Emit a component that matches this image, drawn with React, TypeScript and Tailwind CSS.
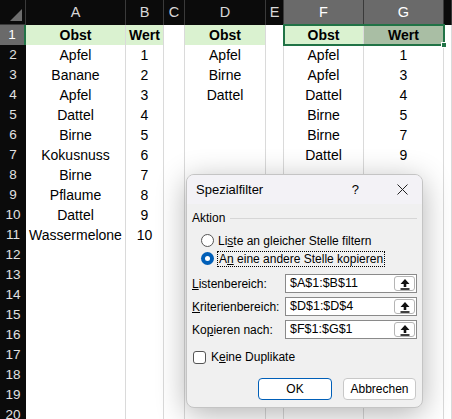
const cols = ['A', 'B', 'C', 'D', 'E', 'F', 'G', '']

const data: string[][] = [
  ['Obst', 'Wert', '', 'Obst', '', 'Obst', 'Wert', ''],
  ['Apfel', '1', '', 'Apfel', '', 'Apfel', '1', ''],
  ['Banane', '2', '', 'Birne', '', 'Apfel', '3', ''],
  ['Apfel', '3', '', 'Dattel', '', 'Dattel', '4', ''],
  ['Dattel', '4', '', '', '', 'Birne', '5', ''],
  ['Birne', '5', '', '', '', 'Birne', '7', ''],
  ['Kokusnuss', '6', '', '', '', 'Dattel', '9', ''],
  ['Birne', '7', '', '', '', '', '', ''],
  ['Pflaume', '8', '', '', '', '', '', ''],
  ['Dattel', '9', '', '', '', '', '', ''],
  ['Wassermelone', '10', '', '', '', '', '', ''],
]

const gridCols = 'grid grid-cols-[26px_100px_38px_21px_81px_18px_80px_80px_1fr]'

function cellBg(r: number, c: number) {
  if (r !== 0) return 'bg-white'
  if (c === 6) return 'bg-[#a9bea4]'
  if (c === 0 || c === 1 || c === 3 || c === 5) return 'bg-[#daf2d0]'
  return 'bg-white'
}

function UpIcon() {
  return (
    <svg width="10" height="12" viewBox="0 0 10 12">
      <path d="M5 1 L9.5 6 H6.3 V9 H3.7 V6 H0.5 Z" fill="#111" />
      <rect x="0.5" y="10.2" width="9" height="1.6" fill="#111" />
    </svg>
  )
}

function RangeInput({ label, value }: { label: React.ReactNode; value: string }) {
  return (
    <div className="flex items-center h-[19px] mb-[4px]">
      <div className="w-[93px]">{label}</div>
      <div className="flex-1 h-[19px] bg-white border border-[#8a8a8a] flex items-center pl-[4px] pr-[1px]">
        <span className="flex-1 text-[12.5px]">{value}</span>
        <div className="w-[21px] h-[15px] border border-[#b5b5b5] rounded-[3px] bg-white flex items-center justify-center">
          <UpIcon />
        </div>
      </div>
    </div>
  )
}

export default function App() {
  return (
    <div className="relative w-[452px] h-[419px] overflow-hidden bg-white font-['Liberation_Sans',Arial,sans-serif]">
      {/* column headers */}
      <div className={`${gridCols} h-[25px] bg-[#0b0b0b]`}>
        <div className="relative border-r border-[#3a3a3a] border-b border-b-[#3a3a3a]">
          <div className="absolute right-[3px] bottom-[3px] w-0 h-0 border-l-[12px] border-l-transparent border-b-[12px] border-b-[#6e6e6e]" />
        </div>
        {cols.map((c, i) => (
          <div
            key={i}
            className={`flex items-center justify-center text-[14.5px] border-r border-[#3a3a3a] ${
              i === 5 || i === 6 ? 'bg-[#6a6a6a] text-white' : 'text-[#d8d8d8]'
            }`}
          >
            {c}
          </div>
        ))}
      </div>

      {/* rows */}
      {Array.from({ length: 20 }).map((_, r) => (
        <div key={r} className={`${gridCols} h-[20px]`}>
          <div
            className={`flex items-center justify-center text-[13.5px] border-b border-[#3a3a3a] ${
              r === 0 ? 'bg-[#6a6a6a] text-white border-r-2 border-r-[#217346]' : 'bg-[#0b0b0b] text-[#e2e2e2]'
            }`}
          >
            {r + 1}
          </div>
          {cols.map((_, c) => (
            <div
              key={c}
              className={`flex items-center justify-center text-[14px] text-black border-r border-b border-[#dadada] whitespace-nowrap ${cellBg(r, c)} ${
                r === 0 ? 'font-bold' : ''
              }`}
            >
              {data[r]?.[c] ?? ''}
            </div>
          ))}
        </div>
      ))}

      {/* selection F1:G1 */}
      <div className="absolute left-[283px] top-[24px] w-[162px] h-[22px] border-2 border-[#217346]" />
      <div className="absolute left-[441px] top-[42px] w-[6px] h-[6px] bg-[#217346] border border-white" />

      {/* dialog */}
      <div className="absolute left-[186px] top-[174px] w-[237px] h-[234px] rounded-[8px] border border-[#c4c4c4] bg-[#f0f0f0] shadow-[0_6px_30px_rgba(0,0,0,0.3)] overflow-hidden text-[12px] text-black">
        <div className="h-[29px] bg-[#f3f2f6] flex items-center pl-[9px] pr-[14px]">
          <span className="flex-1 text-[13px]">Spezialfilter</span>
          <span className="mr-[38px] text-[13px]">?</span>
          <svg width="11" height="11" viewBox="0 0 11 11">
            <path d="M0.5 0.5 L10.5 10.5 M10.5 0.5 L0.5 10.5" stroke="#222" strokeWidth="1" />
          </svg>
        </div>

        <div className="px-[5px]">
          <div className="flex items-center mt-[7px] h-[14px]">
            <span className="mr-[5px]">Aktion</span>
            <div className="flex-1 h-px bg-[#d6d6d6]" />
          </div>

          <div className="pl-[9px] mt-[7px]">
            <div className="flex items-center h-[17px]">
              <div className="w-[13px] h-[13px] rounded-full border border-[#555] bg-white mr-[4px]" />
              <span>
                Li<u>s</u>te an gleicher Stelle filtern
              </span>
            </div>
            <div className="flex items-center h-[17px] mt-[1px]">
              <div className="w-[13px] h-[13px] rounded-full bg-[#005fb8] flex items-center justify-center mr-[3px]">
                <div className="w-[5px] h-[5px] rounded-full bg-white" />
              </div>
              <span className="border border-dotted border-black px-[1px] leading-[14px]">
                A<u>n</u> eine andere Stelle kopieren
              </span>
            </div>
          </div>

          <div className="mt-[7px]">
            <RangeInput label={<><u>L</u>istenbereich:</>} value="$A$1:$B$11" />
            <RangeInput label={<><u>K</u>riterienbereich:</>} value="$D$1:$D$4" />
            <RangeInput label={<>Ko<u>p</u>ieren nach:</>} value="$F$1:$G$1" />
          </div>

          <div className="flex items-center mt-[9px] pl-[1px]">
            <div className="w-[13px] h-[13px] rounded-[3px] border border-[#555] bg-white mr-[5px]" />
            <span>
              K<u>e</u>ine Duplikate
            </span>
          </div>

          <div className="flex justify-end gap-[11px] mt-[12px] pr-[1px]">
            <button className="w-[74px] h-[22px] rounded-[4px] border border-[#005fb8] bg-white text-[12px]">OK</button>
            <button className="w-[73px] h-[22px] rounded-[4px] border border-[#c8c8c8] bg-white text-[12px]">Abbrechen</button>
          </div>
        </div>
      </div>
    </div>
  )
}
